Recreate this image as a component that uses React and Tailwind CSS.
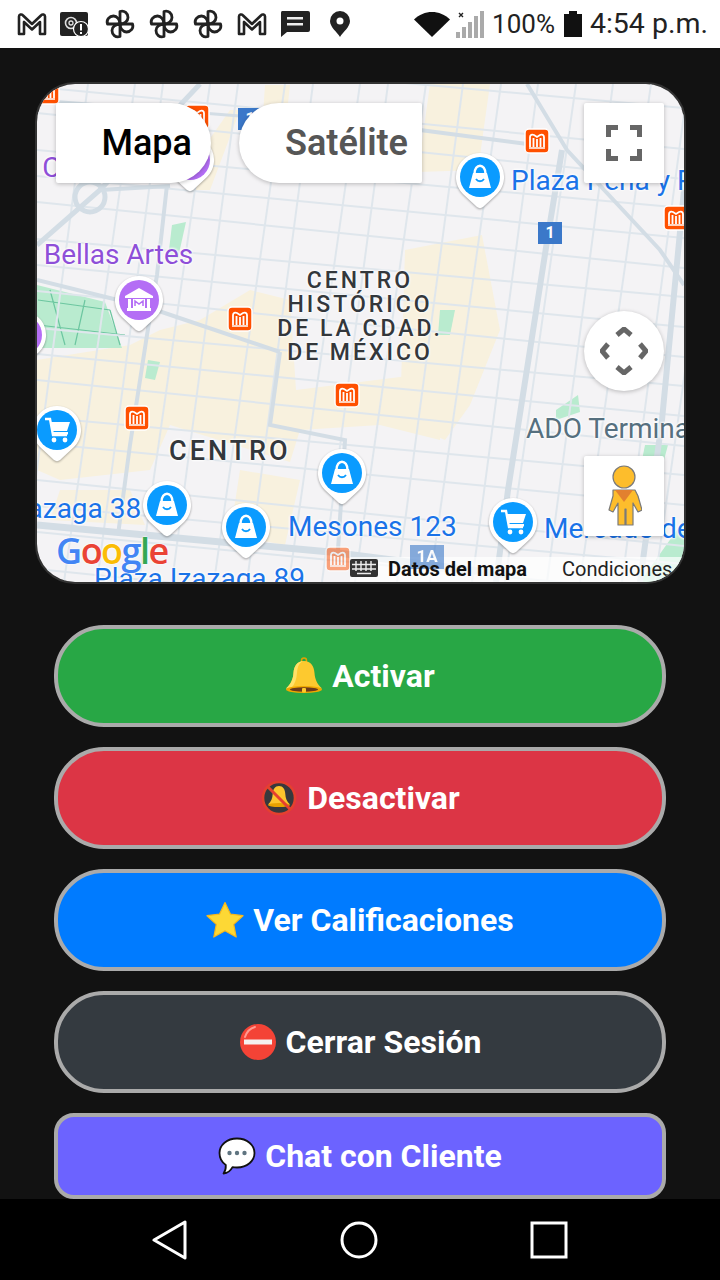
const FONT = "font-['Roboto','Liberation_Sans',sans-serif]";

// --- status bar icons ---
function GmailIcon() {
  return (
    <svg width="32" height="26" viewBox="0 0 32 26" fill="none">
      <path d="M3 23V5.500C3 3.500 5.500 2.800 6.800 4.200L16 13l9.200-8.800C26.500 2.800 29 3.500 29 5.500V23h-5V11l-8 7.500L8 11v12z" stroke="#222" strokeWidth="2.600" strokeLinejoin="round" />
    </svg>
  );
}

function AlertSquareIcon() {
  return (
    <svg width="30" height="26" viewBox="0 0 30 26">
      <rect x="0" y="1" width="28" height="24" rx="2" fill="#222" />
      <circle cx="11" cy="12" r="5.500" fill="none" stroke="#ddd" strokeWidth="1.600" />
      <circle cx="11" cy="12" r="2" fill="none" stroke="#ddd" strokeWidth="1.300" />
      <circle cx="21" cy="18" r="7.500" fill="#222" stroke="#fff" strokeWidth="1.200" />
      <rect x="20" y="13" width="2" height="6.500" fill="#fff" />
      <rect x="20" y="21" width="2" height="2" fill="#fff" />
    </svg>
  );
}

function PinwheelIcon() {
  return (
    <svg width="32" height="32" viewBox="0 0 32 32" fill="none" stroke="#222" strokeWidth="2.800" strokeLinejoin="round">
      <path d="M16 16V3.500c4.500-1.500 8 2 8 6 0 3.500-3.500 6.500-8 6.500z" />
      <path d="M16 16h12.500c1.500 4.500-2 8-6 8-3.500 0-6.500-3.500-6.500-8z" />
      <path d="M16 16v12.500c-4.500 1.500-8-2-8-6 0-3.500 3.500-6.500 8-6.500z" />
      <path d="M16 16H3.500c-1.500-4.500 2-8 6-8 3.500 0 6.500 3.500 6.500 8z" />
    </svg>
  );
}

function MessageIcon() {
  return (
    <svg width="30" height="26" viewBox="0 0 30 26">
      <path d="M2 0h26a2 2 0 0 1 2 2v17a2 2 0 0 1-2 2H7l-6 5V2a2 2 0 0 1 1-2z" fill="#222" />
      <rect x="7" y="6" width="16" height="2.500" fill="#eee" />
      <rect x="7" y="12" width="16" height="2.500" fill="#eee" />
    </svg>
  );
}

function LocationIcon() {
  return (
    <svg width="20" height="26" viewBox="0 0 20 26">
      <path d="M10 0a10 10 0 0 1 10 10c0 6-7 11-10 16C7 21 0 16 0 10A10 10 0 0 1 10 0z" fill="#222" />
      <circle cx="10" cy="10" r="3.500" fill="#fff" />
    </svg>
  );
}

function WifiIcon() {
  return (
    <svg width="36" height="26" viewBox="0 0 36 26">
      <path d="M0 8.500C10-1.500 26-1.500 36 8.500L18 26z" fill="#111" />
    </svg>
  );
}

function SignalIcon() {
  return (
    <svg width="28" height="28" viewBox="0 0 28 28">
      <path d="M3 3l4 4M7 3l-4 4" stroke="#222" strokeWidth="1.400" />
      <rect x="0" y="22" width="4" height="6" fill="#aaa" />
      <rect x="6" y="17" width="4" height="11" fill="#aaa" />
      <rect x="12" y="12" width="4" height="16" fill="#aaa" />
      <rect x="18" y="6" width="4" height="22" fill="#aaa" />
      <rect x="24" y="1" width="4" height="27" fill="#aaa" />
    </svg>
  );
}

function BatteryIcon() {
  return (
    <svg width="18" height="26" viewBox="0 0 18 26">
      <path d="M5 0h8v3h5v23H0V3h5z" fill="#111" />
    </svg>
  );
}

// --- emoji drawings for the buttons ---
function BellEmoji({ size = 38 }) {
  return (
    <svg width={size} height={size} viewBox="0 0 38 38">
      <circle cx="19" cy="3.500" r="2.500" fill="none" stroke="#e2a000" strokeWidth="1.500" />
      <path d="M19 4c7 0 10 5 10.500 12 .4 6 2.500 11 7.500 15.500H1C6 27 8.100 22 8.500 16 9 9 12 4 19 4z" fill="#fdc92f" />
      <path d="M19 4c-5 1-6.500 6-7 12-.4 6-2 11-6 15.500H1C6 27 8.100 22 8.500 16 9 9 12 4 19 4z" fill="#ffe168" />
      <ellipse cx="19" cy="32.500" rx="18" ry="3.500" fill="#f0a800" />
      <ellipse cx="19" cy="32.500" rx="14" ry="2.200" fill="#6b3a1c" />
      <rect x="17" y="31" width="4" height="4.500" rx="1" fill="#ffca28" />
    </svg>
  );
}

function NoBellEmoji() {
  return (
    <svg width="38" height="38" viewBox="0 0 38 38">
      <circle cx="19" cy="19" r="16" fill="#37393d" stroke="#e5402f" strokeWidth="2.600" />
      <path d="M19 7c4 0 6 3 6.300 8 .2 4 1.500 7.500 4.700 10.500H8c3.200-3 4.500-6.500 4.700-10.500C13 10 15 7 19 7z" fill="#fcc52c" />
      <ellipse cx="19" cy="26" rx="11" ry="2" fill="#e7a100" />
      <path d="M8 8l22 22" stroke="#e5402f" strokeWidth="3" />
    </svg>
  );
}

function StarEmoji() {
  return (
    <svg width="38" height="38" viewBox="0 0 38 38">
      <path d="M19 1.500l5.400 11.600 12.600 1.600-9.300 8.700 2.500 12.600L19 29.700 7.800 36l2.500-12.600L1 14.700l12.600-1.600z" fill="#fdd835" stroke="#f9b819" strokeWidth="1.200" strokeLinejoin="round" />
    </svg>
  );
}

function NoEntryEmoji() {
  return (
    <svg width="38" height="38" viewBox="0 0 38 38">
      <circle cx="19" cy="19" r="18" fill="#f44336" />
      <path d="M6 14C8 8 12 5 16 4" fill="none" stroke="#ff9a90" strokeWidth="2" strokeLinecap="round" />
      <rect x="5" y="16.500" width="28" height="5" fill="#f5f0ee" />
    </svg>
  );
}

function SpeechEmoji() {
  return (
    <svg width="38" height="38" viewBox="0 0 38 38">
      <path d="M19 1.500c10 0 17.500 6.500 17.500 14.500S29 30.500 19 30.500c-1.500 0-3-.1-4.500-.4C13 33 10 36 5.500 36.500 7.500 34 8 31.500 7.800 28 3.800 25.300 1.500 21 1.500 16 1.500 8 9 1.500 19 1.500z" fill="#fff" stroke="#111" strokeWidth="1.800" strokeLinejoin="round" />
      <circle cx="11.500" cy="16" r="2.200" fill="#5f7480" />
      <circle cx="19" cy="16" r="2.200" fill="#5f7480" />
      <circle cx="26.500" cy="16" r="2.200" fill="#5f7480" />
    </svg>
  );
}

// --- map pieces ---
const MAJOR_ROADS = [
  { d: "M527 84 L567 150 L660 250 L684 285", w: 4 },
  { d: "M562 150 L548 235 L530 350 L508 490 L496 582", w: 6 },
  { d: "M684 190 L662 420 L640 582", w: 6 },
  { d: "M37 245 L100 190 L200 84", w: 5 },
  { d: "M167 185 L157 275 L147 335 L130 445 L118 535", w: 4 },
  { d: "M37 280 L150 308 L280 352", w: 4 },
  { d: "M280 352 L270 425 L345 440 L338 550", w: 4 },
  { d: "M37 525 L330 552 L510 575", w: 7 },
  { d: "M36 100 L240 116", w: 3 },
  { d: "M420 130 L535 145", w: 4 },
  { d: "M100 190 L170 186", w: 4 },
];

const PARK_LINES = "M38 300 L110 310 M50 290 L65 345 M85 300 L75 345 M38 325 L125 335 M110 310 L120 345";

const BEIGE_AREAS = [
  "430,84 490,84 478,170 418,172",
  "130,345 160,330 200,320 250,290 290,300 296,390 440,372 440,440 380,425 300,430 290,462 170,425 150,470 60,480 37,470 37,360",
  "405,250 482,235 500,330 470,405 445,440 400,420",
  "240,470 300,480 285,545 230,535",
  "130,490 145,525 50,520 60,490",
  "185,190 195,160 230,110 240,110 210,190",
  "265,85 290,85 285,130 262,130",
];

const GREEN_AREAS = [
  "37,285 105,302 122,348 37,348",
  "640,582 684,520 684,582",
  "556,410 578,395 580,412 556,420",
  "148,360 160,362 155,380 145,378",
  "172,225 186,222 178,258 168,258",
  "440,310 455,310 450,335 438,335",
  "645,445 668,445 664,460 642,460",
];

const METROS = [
  { x: 47, y: 92 }, { x: 197, y: 117 }, { x: 537, y: 141 }, { x: 676, y: 218 },
  { x: 240, y: 319 }, { x: 347, y: 395 }, { x: 137, y: 418 },
];

const PINS = [
  { x: 190, y: 160, color: "#b46ef5", icon: "none" },
  { x: 480, y: 177, color: "#0a9bff", icon: "bag" },
  { x: 139, y: 300, color: "#b46ef5", icon: "museum" },
  { x: 22, y: 335, color: "#b46ef5", icon: "none" },
  { x: 57, y: 430, color: "#0a9bff", icon: "cart" },
  { x: 342, y: 473, color: "#0a9bff", icon: "bag" },
  { x: 167, y: 505, color: "#0a9bff", icon: "bag" },
  { x: 246, y: 527, color: "#0a9bff", icon: "bag" },
  { x: 513, y: 522, color: "#0a9bff", icon: "cart" },
];

const LABELS = [
  { text: "a C", x: 20, y: 168, cls: "text-[#8e4fd8] text-[28px]" },
  { text: "Plaza Peña y P", x: 511, y: 181, cls: "text-[#1a73e8] text-[28px]" },
  { text: "e Bellas Artes", x: 22, y: 255, cls: "text-[#8e4fd8] text-[28px]" },
  { text: "ADO Terminal", x: 526, y: 429, cls: "text-[#56707f] text-[28px]" },
  { text: "Izazaga 38", x: 6, y: 509, cls: "text-[#1a73e8] text-[28px]" },
  { text: "Mesones 123", x: 288, y: 527, cls: "text-[#1a73e8] text-[28px]" },
  { text: "Mercado de", x: 544, y: 529, cls: "text-[#1a73e8] text-[28px]" },
  { text: "Plaza Izazaga 89", x: 94, y: 579, cls: "text-[#1a73e8] text-[28px]" },
  { text: "CENTRO", x: 169, y: 451, cls: "text-[#33373b] text-[27px] font-medium tracking-[3px]" },
];

const HISTORIC_LINES = ["CENTRO", "HISTÓRICO", "DE LA CDAD.", "DE MÉXICO"];

function MetroIcon() {
  return (
    <svg width="26" height="26" viewBox="0 0 26 26">
      <rect x="1" y="1" width="24" height="24" rx="4" fill="#ff5000" stroke="#fff" strokeWidth="1.500" />
      <path d="M6 19V9c0-2 2-3 4-2l3 2 3-2c2-1 4 0 4 2v10" fill="none" stroke="#fff" strokeWidth="1.800" />
      <path d="M9.500 10v9M13 11v8M16.500 10v9" stroke="#fff" strokeWidth="1.800" />
      <path d="M5 20h16" stroke="#fff" strokeWidth="1.500" />
    </svg>
  );
}

function PinGlyph({ kind }) {
  if (kind === "bag") {
    return (
      <g>
        <path d="M19.500 22c0-11 11-11 11 0" fill="none" stroke="#fff" strokeWidth="2.400" />
        <path d="M18 21h14l4 15H14z" fill="#fff" />
        <path d="M21 27c2 3 6 3 8 0" fill="none" stroke="#0a9bff" strokeWidth="1.800" />
      </g>
    );
  }
  if (kind === "cart") {
    return (
      <g>
        <path d="M13 14h5l3 16h14" fill="none" stroke="#fff" strokeWidth="2.400" />
        <path d="M18 17h20l-3 9H20z" fill="#fff" />
        <rect x="20" y="27" width="16" height="2.500" fill="#fff" />
        <circle cx="22" cy="35" r="2.400" fill="#fff" />
        <circle cx="33" cy="35" r="2.400" fill="#fff" />
      </g>
    );
  }
  if (kind === "museum") {
    return (
      <g fill="#fff">
        <path d="M25 13l14 8v2H11v-2z" />
        <rect x="13" y="33" width="24" height="3" />
        <rect x="14" y="24" width="3" height="9" />
        <rect x="33" y="24" width="3" height="9" />
        <rect x="19" y="24" width="12" height="9" />
        <path d="M21 31v-5l4 3 4-3v5" fill="none" stroke="#b46ef5" strokeWidth="1.500" />
      </g>
    );
  }
  return null;
}

function MapPin({ color, icon }) {
  return (
    <svg width="50" height="58" viewBox="0 0 50 58" className="drop-shadow-[0_1px_1px_rgba(0,0,0,0.35)]">
      <path d="M25 1a24 24 0 0 1 17 41L28 55c-2 1.500-4 1.500-6 0L8 42A24 24 0 0 1 25 1z" fill="#fff" />
      <circle cx="25" cy="25" r="20" fill={color} />
      <PinGlyph kind={icon} />
    </svg>
  );
}

function MapDrawing() {
  const horizontals = Array.from({ length: 20 }, (_, i) => 50 + i * 30 + (i * 7) % 11);
  const verticals = Array.from({ length: 20 }, (_, i) => 50 + i * 37 + (i * 5) % 9);
  return (
    <svg className="absolute inset-0" width="648" height="498" viewBox="37 84 648 498">
      <rect x="37" y="84" width="648" height="498" fill="#f4f3f5" />
      {BEIGE_AREAS.map((points) => <polygon key={points} points={points} fill="#f8f1de" />)}
      {GREEN_AREAS.map((points) => <polygon key={points} points={points} fill="#b9ebcf" />)}
      <path d={PARK_LINES} fill="none" stroke="#6cc6a0" strokeWidth="1.200" />
      {horizontals.map((y, i) => (
        <line key={y} x1="37" y1={y} x2="684" y2={y + 58 + (i % 3) * 4} stroke="#dfe6ec" strokeWidth="2" />
      ))}
      {verticals.map((x, i) => (
        <line key={x} x1={x + 38 + (i % 2) * 5} y1="84" x2={x - 28} y2="582" stroke="#dfe6ec" strokeWidth="2" />
      ))}
      {MAJOR_ROADS.map((road) => <path key={road.d} d={road.d} fill="none" stroke="#d3dde5" strokeWidth={road.w} />)}
      <circle cx="90" cy="197" r="15" fill="none" stroke="#d3dde5" strokeWidth="5" />
      <rect x="350" y="557" width="334" height="25" fill="#ffffff" fillOpacity="0.7" />
    </svg>
  );
}

function RouteShield({ text, className }) {
  return (
    <div className={`absolute flex items-center justify-center bg-[#3b78c9] text-white font-bold ${className}`}>{text}</div>
  );
}

function GoogleLogo() {
  return (
    <div className="absolute left-[19px] top-[449px] flex font-['Open_Sans',sans-serif] text-[36px] font-semibold leading-none tracking-[-1.500px] [text-shadow:0_0_2px_#fff,0_0_2px_#fff]">
      <span className="text-[#4285f4]">G</span>
      <span className="text-[#ea4335]">o</span>
      <span className="text-[#fbbc05]">o</span>
      <span className="text-[#4285f4]">g</span>
      <span className="text-[#34a853]">l</span>
      <span className="text-[#ea4335]">e</span>
    </div>
  );
}

function MapPanel() {
  return (
    <div className="relative mx-[35px] mt-[34px] h-[502px] w-[651px] overflow-hidden rounded-[40px] border-2 border-[#333]">
      <MapDrawing />

      {LABELS.map((l) => (
        <span
          key={l.text}
          className={`absolute -translate-y-1/2 whitespace-nowrap leading-none [text-shadow:0_0_3px_#fff,0_0_3px_#fff,0_0_3px_#fff] ${l.cls}`}
          style={{ left: l.x - 37, top: l.y - 84 }}
        >
          {l.text}
        </span>
      ))}

      <div className="absolute left-[223px] top-[185px] flex w-[200px] flex-col items-center text-[23px] font-medium leading-[24px] tracking-[3px] text-[#33373b] [text-shadow:0_0_3px_#fff,0_0_3px_#fff]">
        {HISTORIC_LINES.map((line) => <span key={line} className="whitespace-nowrap">{line}</span>)}
      </div>

      {METROS.map((m) => (
        <div key={`${m.x}-${m.y}`} className="absolute" style={{ left: m.x - 37 - 13, top: m.y - 84 - 13 }}>
          <MetroIcon />
        </div>
      ))}

      <RouteShield text="1" className="left-[501px] top-[138px] h-[22px] w-[24px] text-[16px]" />
      <RouteShield text="1" className="left-[201px] top-[24px] h-[22px] w-[24px] text-[16px]" />
      <RouteShield text="1A" className="left-[373px] top-[461px] h-[24px] w-[34px] text-[17px] opacity-60" />

      <div className="absolute left-[288px] top-[462px] opacity-50"><MetroIcon /></div>

      {PINS.map((p) => (
        <div key={`${p.x}-${p.y}`} className="absolute" style={{ left: p.x - 37 - 25, top: p.y - 84 - 25 }}>
          <MapPin color={p.color} icon={p.icon} />
        </div>
      ))}

      <GoogleLogo />

      {/* attribution row */}
      <svg className="absolute left-[313px] top-[475px]" width="28" height="18" viewBox="0 0 28 18">
        <rect width="28" height="18" rx="2" fill="#333" />
        <path d="M2 5.500h24M2 10h24M6 2v10M11 2v10M16 2v10M21 2v10M7 14.500h14" stroke="#eee" strokeWidth="1.400" />
      </svg>
      <span className="absolute left-[351px] top-[473px] text-[20px] font-bold leading-[24px] text-[#111]">Datos del mapa</span>
      <span className="absolute left-[525px] top-[473px] text-[20px] leading-[24px] text-[#222]">Condiciones</span>

      {/* map type toggle */}
      <div className="absolute left-[19px] top-[19px] flex h-[80px] w-[155px] items-center justify-end rounded-l-[2px] rounded-r-[40px] bg-white pr-[19px] text-[36px] font-medium text-black shadow-[0_1px_4px_rgba(0,0,0,0.25)]">
        Mapa
      </div>
      <div className="absolute left-[202px] top-[19px] flex h-[80px] w-[183px] items-center justify-end rounded-l-[40px] rounded-r-[2px] bg-white pr-[14px] text-[36px] font-semibold text-[#565656] shadow-[0_1px_4px_rgba(0,0,0,0.25)]">
        Satélite
      </div>

      {/* fullscreen */}
      <div className="absolute left-[547px] top-[19px] flex h-[80px] w-[80px] items-center justify-center rounded-[2px] bg-white shadow-[0_1px_4px_rgba(0,0,0,0.25)]">
        <svg width="36" height="36" viewBox="0 0 36 36" fill="none" stroke="#666" strokeWidth="5">
          <path d="M2.500 12V2.500H12M24 2.500h9.500V12M33.500 24v9.500H24M12 33.500H2.500V24" />
        </svg>
      </div>

      {/* camera control */}
      <div className="absolute left-[547px] top-[227px] flex h-[80px] w-[80px] items-center justify-center rounded-full bg-white shadow-[0_1px_4px_rgba(0,0,0,0.25)]">
        <svg width="48" height="48" viewBox="0 0 48 48" fill="none" stroke="#666" strokeWidth="5">
          <path d="M17 8l7-6 7 6M8 17l-6 7 6 7M40 17l6 7-6 7M17 40l7 6 7-6" />
        </svg>
      </div>

      {/* pegman */}
      <div className="absolute left-[547px] top-[372px] flex h-[80px] w-[80px] items-center justify-center rounded-[2px] bg-white shadow-[0_1px_4px_rgba(0,0,0,0.25)]">
        <svg width="36" height="62" viewBox="0 0 36 62">
          <circle cx="18" cy="12" r="11" fill="#fdbd2c" stroke="#7a7a7a" strokeWidth="1.200" />
          <path d="M7 25h22l3 6 4 14-4 2-5-9 0 22h-7V44h-1v16h-7l0-22-5 9-4-2 4-14z" fill="#fdbd2c" stroke="#7a7a7a" strokeWidth="1.200" strokeLinejoin="round" />
          <path d="M9 25h18l-9 12z" fill="#e2802f" />
        </svg>
      </div>
    </div>
  );
}

function ActionButton({ icon, label, className, radius = "rounded-[50px]", height = "h-[102px]" }) {
  return (
    <button className={`flex w-[612px] shrink-0 items-center justify-center gap-[9px] border-4 border-[#aaa] text-[32px] font-bold text-white ${radius} ${height} ${className}`}>
      {icon}
      <span>{label}</span>
    </button>
  );
}

export default function App() {
  return (
    <div className={`flex h-[1280px] w-[720px] flex-col overflow-hidden bg-[#121212] ${FONT}`}>
      <div className="flex h-12 shrink-0 items-center justify-between bg-white pl-[16px] pr-[12px]">
        <div className="flex items-center gap-[12px]">
          <GmailIcon />
          <AlertSquareIcon />
          <div className="ml-[2px]"><PinwheelIcon /></div>
          <PinwheelIcon />
          <PinwheelIcon />
          <GmailIcon />
          <MessageIcon />
          <div className="ml-[8px]"><LocationIcon /></div>
        </div>
        <div className="flex items-center leading-none text-[#222]">
          <WifiIcon />
          <div className="ml-[6px]"><SignalIcon /></div>
          <span className="ml-[8px] text-[26px]">100%</span>
          <div className="ml-[9px]"><BatteryIcon /></div>
          <span className="ml-[8px] text-[28.500px]">4:54 p.m.</span>
        </div>
      </div>

      <div className="min-h-0 flex-1 overflow-hidden">
        <MapPanel />
        <div className="mt-[41px] flex flex-col items-center gap-[20px]">
          <ActionButton icon={<BellEmoji />} label="Activar" className="bg-[#28a745]" />
          <ActionButton icon={<NoBellEmoji />} label="Desactivar" className="bg-[#dc3545]" />
          <ActionButton icon={<StarEmoji />} label="Ver Calificaciones" className="bg-[#007bff]" />
          <ActionButton icon={<NoEntryEmoji />} label="Cerrar Sesión" className="bg-[#343a40]" />
          <ActionButton icon={<SpeechEmoji />} label="Chat con Cliente" className="bg-[#6c63ff]" radius="rounded-[20px]" height="h-[86px]" />
        </div>
      </div>

      <div className="flex h-[81px] shrink-0 items-center justify-center bg-black">
        <div className="flex items-center gap-[152px]">
          <svg width="36" height="40" viewBox="0 0 36 40" fill="none" stroke="#fff" strokeWidth="3" strokeLinejoin="round">
            <path d="M33 2v36L2 20z" />
          </svg>
          <svg width="38" height="38" viewBox="0 0 38 38" fill="none" stroke="#fff" strokeWidth="3">
            <circle cx="19" cy="19" r="17" />
          </svg>
          <svg width="38" height="38" viewBox="0 0 38 38" fill="none" stroke="#fff" strokeWidth="3">
            <rect x="2" y="2" width="34" height="34" />
          </svg>
        </div>
      </div>
    </div>
  );
}
